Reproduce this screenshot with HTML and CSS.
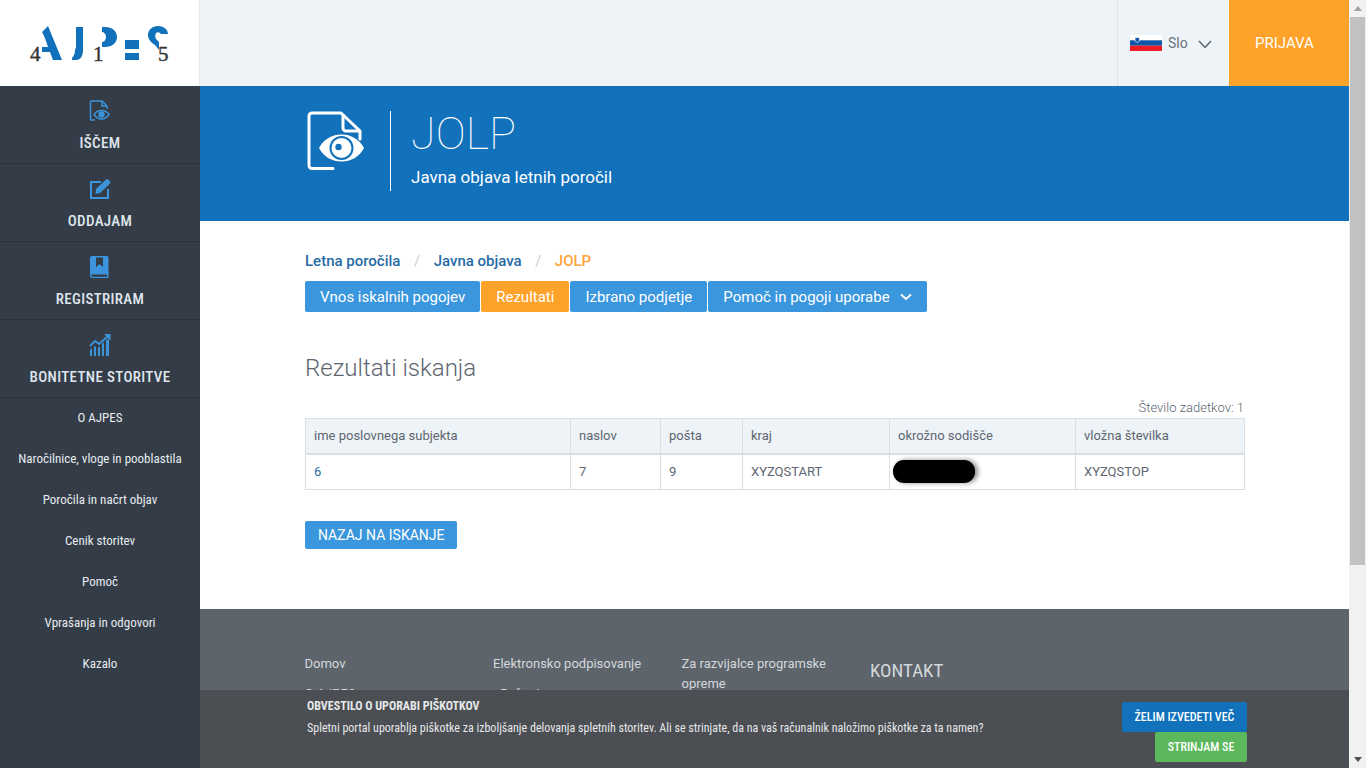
FILE: index.html
```html
<!DOCTYPE html>
<html lang="sl">
<head>
    <meta charset="UTF-8">
    <meta name="viewport" content="width=device-width, initial-scale=1.0">
    <title>JOLP - AJPES</title>
    <link rel="stylesheet" href="styles.css">
</head>
<body>
<div class="page">

    <!-- Sidebar -->
    <aside class="sidebar">
        <a class="logo" href="#">
            <svg class="logo-art" width="200" height="86" viewBox="0 0 200 86" fill="#1171bb">
                <path d="M42 32l6-6 14 34h-9l-3-8h-8v-5h6l-2-6-2-5z"/>
                <path d="M76 27h7v23c0 5-2 10-7 10h-4v-2c2-2 3-5 3-8l1-3z"/>
                <path d="M102 27h3c7 0 12 4 12 10s-5 10-12 10h-3v-5c2 0 4-2 4-5s-2-5-4-5z"/>
                <path d="M125 40h14v9h-14zM125 53h14v7h-14z"/>
                <path d="M168 34c0-5-5-8-10-8-6 0-10 4-10 9 0 5 4 8 7 10l4 5v-8l-3-3c-1-2-1-4 0-6 1-1 3-1 4 0l1 1z"/>
            </svg>
            <span class="logo-num n4">4</span>
            <span class="logo-num n1">1</span>
            <span class="logo-num n5">5</span>
        </a>

        <nav class="main-nav">
            <a class="main-item" href="#">
                <svg width="22" height="22" viewBox="0 0 22 22" fill="none" stroke="#3b94dc" stroke-width="1.4">
                    <path d="M6 20H2.500a1 1 0 0 1-1-1V2a1 1 0 0 1 1-1H13l5 5v3"/>
                    <path d="M13 1v5h5"/>
                    <path d="M5 14.500c2-3 4.500-4 7.500-4s5.500 1 7.500 4c-2 3-4.500 4.500-7.500 4.500S7 17.500 5 14.500z"/>
                    <circle cx="12.500" cy="14.500" r="2.500" fill="#3b94dc"/>
                </svg>
                <span>IŠČEM</span>
            </a>
            <a class="main-item" href="#">
                <svg width="22" height="22" viewBox="0 0 22 22" fill="none">
                    <path stroke="#3b94dc" stroke-width="2" d="M12 4H2v16h17v-9"/>
                    <path fill="#3b94dc" d="M7 11L17 1.500a1.500 1.500 0 0 1 2 0l2 2a1.500 1.500 0 0 1 0 2L11 15l-4.500 1z"/>
                </svg>
                <span>ODDAJAM</span>
            </a>
            <a class="main-item" href="#">
                <svg width="22" height="22" viewBox="0 0 22 22">
                    <path fill="#3b94dc" fill-rule="evenodd" d="M3 0h15a1.500 1.500 0 0 1 1.500 1.500V21a1 1 0 0 1-1 1H3a2 2 0 0 1-2-2V2a2 2 0 0 1 2-2zM7 1.500V11l3.500-3 3.500 3V1.500zM2.500 18.500V20a.7.7 0 0 0 .7.7H18v-2.200z"/>
                </svg>
                <span>REGISTRIRAM</span>
            </a>
            <a class="main-item" href="#">
                <svg width="22" height="22" viewBox="0 0 22 22" fill="#3b94dc">
                    <path d="M1 16l2-2v8H1zM5 12l2 1v9H5zM9 14l2-2v10H9zM13 10l2-2v14h-2zM17 6l3-1v17h-3z"/>
                    <path fill="none" stroke="#3b94dc" stroke-width="1.800" d="M1 12l5-5 4 3 9-8"/>
                    <path d="M15 0h6.500v6.500z"/>
                </svg>
                <span>BONITETNE STORITVE</span>
            </a>
        </nav>

        <nav class="sub-nav">
            <a href="#">O AJPES</a>
            <a href="#">Naročilnice, vloge in pooblastila</a>
            <a href="#">Poročila in načrt objav</a>
            <a href="#">Cenik storitev</a>
            <a href="#">Pomoč</a>
            <a href="#">Vprašanja in odgovori</a>
            <a href="#">Kazalo</a>
        </nav>
    </aside>

    <!-- Main -->
    <div class="main">
        <header class="topbar">
            <div class="lang">
                <svg class="flag" width="32" height="16" viewBox="0 0 32 16">
                    <rect width="32" height="5.300" fill="#fff"/>
                    <rect y="5.300" width="32" height="5.400" fill="#0d56a8"/>
                    <rect y="10.700" width="32" height="5.300" fill="#ed1c24"/>
                    <path d="M5 2.500h4.500v3.500L7.250 7.500 5 6z" fill="#0d56a8" stroke="#fff" stroke-width=".7"/>
                </svg>
                <span>Slo</span>
                <svg class="lang-arrow" width="14" height="9" viewBox="0 0 14 9" fill="none" stroke="#5d6670" stroke-width="1.500"><path d="M1 1l6 6.500L13 1"/></svg>
            </div>
            <a class="login" href="#">PRIJAVA</a>
        </header>

        <section class="banner">
            <svg class="banner-icon" width="58" height="60" viewBox="0 0 58 60" fill="none">
                <path stroke="#fff" stroke-width="3" stroke-linejoin="round" stroke-linecap="round" d="M26 57.500H5a3 3 0 0 1-3-3V5a3 3 0 0 1 3-3h29l19 18v8"/>
                <path stroke="#fff" stroke-width="3" stroke-linejoin="round" d="M36 3v14a3 3 0 0 0 3 3h14"/>
                <path fill="#fff" d="M12 37c5-9 13-13.500 22.500-13.500S52 28 57 37c-5 9-13 13.500-22.500 13.500S17 46 12 37z"/>
                <circle cx="34.500" cy="37" r="12" fill="#1171bb"/>
                <circle cx="34.500" cy="37" r="10" fill="#fff"/>
                <circle cx="31.500" cy="36" r="3.200" fill="#1171bb"/>
            </svg>
            <div class="banner-text">
                <h1>JOLP</h1>
                <p>Javna objava letnih poročil</p>
            </div>
        </section>

        <section class="content">
            <ol class="crumbs">
                <li><a href="#">Letna poročila</a></li>
                <li class="sep">/</li>
                <li><a href="#">Javna objava</a></li>
                <li class="sep">/</li>
                <li class="current">JOLP</li>
            </ol>

            <div class="tabs">
                <a class="tab" href="#">Vnos iskalnih pogojev</a>
                <a class="tab active" href="#">Rezultati</a>
                <a class="tab" href="#">Izbrano podjetje</a>
                <a class="tab" href="#">Pomoč in pogoji uporabe
                    <svg width="12" height="8" viewBox="0 0 12 8" fill="none" stroke="#fff" stroke-width="2"><path d="M1 1.500l5 4.500 5-4.500"/></svg>
                </a>
            </div>

            <h2>Rezultati iskanja</h2>
            <p class="hits">Število zadetkov: 1</p>

            <table class="results">
                <thead>
                    <tr>
                        <th class="c1">ime poslovnega subjekta</th>
                        <th class="c2">naslov</th>
                        <th class="c3">pošta</th>
                        <th class="c4">kraj</th>
                        <th class="c5">okrožno sodišče</th>
                        <th>vložna številka</th>
                    </tr>
                </thead>
                <tbody>
                    <tr>
                        <td><a href="#">6</a></td>
                        <td>7</td>
                        <td>9</td>
                        <td>XYZQSTART</td>
                        <td><span class="blackout"></span></td>
                        <td>XYZQSTOP</td>
                    </tr>
                </tbody>
            </table>

            <a class="back" href="#">NAZAJ NA ISKANJE</a>
        </section>

        <footer class="footer">
            <div class="foot-col">
                <a href="#">Domov</a>
                <a href="#">O AJPES</a>
            </div>
            <div class="foot-col">
                <a href="#">Elektronsko podpisovanje</a>
                <a class="indent" href="#">Računi</a>
            </div>
            <div class="foot-col">
                <a href="#">Za razvijalce programske opreme</a>
            </div>
            <div class="foot-col">
                <h3>KONTAKT</h3>
            </div>
        </footer>
    </div>

    <!-- Scrollbar -->
    <div class="scrollbar">
        <span class="arrow up"></span>
        <div class="thumb"></div>
        <span class="arrow down"></span>
    </div>
</div>

<!-- Cookie notice -->
<div class="cookie">
    <div class="cookie-text">
        <h4>OBVESTILO O UPORABI PIŠKOTKOV</h4>
        <p>Spletni portal uporablja piškotke za izboljšanje delovanja spletnih storitev. Ali se strinjate, da na vaš računalnik naložimo piškotke za ta namen?</p>
    </div>
    <div class="cookie-btns">
        <a class="more" href="#">ŽELIM IZVEDETI VEČ</a>
        <a class="agree" href="#">STRINJAM SE</a>
    </div>
</div>
</body>
</html>
```
FILE: styles.css
```css
* {
    margin: 0;
    padding: 0;
    box-sizing: border-box;
}

html, body {
    height: 100%;
    overflow: hidden;
}

body {
    font-family: Roboto, "Liberation Sans", sans-serif;
    color: #5d6670;
    background-color: #fff;
}

a {
    text-decoration: none;
    color: inherit;
}

.page {
    display: flex;
    height: 768px;
}

/* Sidebar */
.sidebar {
    width: 200px;
    flex-shrink: 0;
    background-color: #343d47;
}

.logo {
    display: block;
    position: relative;
    height: 86px;
    background-color: #fff;
    border-right: 1px solid #e3e7ea;
}

.logo-art {
    position: absolute;
    left: 0;
    top: 0;
}

.logo-num {
    position: absolute;
    top: 42px;
    font-family: "Liberation Serif", serif;
    font-size: 21px;
    line-height: 24px;
    color: #333;
    -webkit-text-stroke: 0.4px #333;
}

.n4 { left: 30px; }
.n1 { left: 93px; }
.n5 { left: 158px; }

.main-item {
    display: flex;
    flex-direction: column;
    align-items: center;
    height: 78px;
    padding-top: 14px;
    border-bottom: 1px solid #2b333c;
}

.main-item span {
    margin-top: 11px;
    font-size: 15px;
    font-weight: 500;
    line-height: 20px;
    font-stretch: condensed;
    letter-spacing: 0.35px;
    color: #dfe6ee;
}

.sub-nav {
    display: flex;
    flex-direction: column;
}

.sub-nav a {
    height: 41px;
    font-size: 13px;
    line-height: 40px;
    font-stretch: condensed;
    text-align: center;
    color: #e6ebf0;
}

/* Main */
.main {
    flex: 1;
    min-width: 0;
    display: flex;
    flex-direction: column;
    overflow: hidden;
}

.topbar {
    display: flex;
    justify-content: flex-end;
    height: 86px;
    flex-shrink: 0;
    background-color: #eef3f8;
}

.lang {
    display: flex;
    align-items: center;
    width: 112px;
    padding-left: 12px;
    border-left: 1px solid #dde3e8;
    font-size: 14px;
    color: #6b747d;
}

.flag {
    margin-right: 6px;
}

.lang-arrow {
    margin-left: 10px;
    margin-top: 3px;
}

.login {
    width: 120px;
    padding-left: 26px;
    background-color: #ffa229;
    color: #fff;
    font-size: 15px;
    line-height: 86px;
}

.banner {
    display: flex;
    align-items: flex-start;
    height: 135px;
    flex-shrink: 0;
    padding: 25px 0 0 107px;
    background-color: #1171bb;
    color: #fff;
}

.banner-icon {
    margin-right: 25px;
}

.banner-text {
    height: 80px;
    padding-left: 20px;
    border-left: 1px solid #fff;
}

.banner-text h1 {
    font-size: 45px;
    font-weight: 100;
    line-height: 46px;
}

.banner-text p {
    margin-top: 9px;
    font-size: 17px;
    line-height: 22px;
}

.content {
    height: 388px;
    flex-shrink: 0;
    padding: 30px 105px 0;
}

.crumbs {
    display: flex;
    list-style: none;
    gap: 13.500px;
    font-size: 15px;
    font-weight: 500;
    line-height: 20px;
    color: #276ba5;
}

.crumbs .sep {
    color: #ccc;
    font-weight: 400;
}

.crumbs .current {
    color: #ffa23c;
}

.tabs {
    display: flex;
    gap: 1px;
    margin-top: 10px;
}

.tab {
    display: flex;
    align-items: center;
    gap: 10px;
    height: 31px;
    padding: 0 15px;
    border-radius: 2px;
    background-color: #3a96dd;
    color: #fff;
    font-size: 15px;
}

.tab.active {
    background-color: #ffa229;
}

h2 {
    margin-top: 40px;
    font-size: 24px;
    font-weight: 300;
    line-height: 32px;
    color: #5d6670;
}

.hits {
    margin-top: 16px;
    font-size: 13px;
    font-weight: 300;
    line-height: 16px;
    text-align: right;
}

.results {
    width: 940px;
    margin-top: 2px;
    border-collapse: collapse;
    table-layout: fixed;
    font-size: 13px;
}

.results th,
.results td {
    padding: 0 8px;
    border: 1px solid #dcdfe2;
    font-weight: 400;
    text-align: left;
}

.results th {
    height: 35px;
    padding-bottom: 1px;
    background-color: #eef3f8;
    border-bottom-width: 2px;
}

.results td {
    height: 36px;
}

.results td a {
    color: #276ba5;
}

.c1 { width: 265px; }
.c2 { width: 90px; }
.c3 { width: 82px; }
.c4 { width: 147px; }
.c5 { width: 186px; }

.blackout {
    display: block;
    width: 82px;
    height: 23px;
    border-radius: 11px;
    margin-left: -5px;
    background-color: #000;
    box-shadow: 3px 0 5px rgba(0, 0, 0, 0.45);
}

.back {
    display: inline-block;
    margin-top: 31px;
    height: 28px;
    padding: 0 13px;
    border-radius: 2px;
    background-color: #3a96dd;
    color: #fff;
    font-size: 14px;
    line-height: 28px;
}

.footer {
    flex: 1;
    display: flex;
    padding: 45px 100px 0 104.500px;
    background-color: #5d646c;
    color: #d5d8db;
    font-size: 13px;
}

.foot-col {
    width: 188.500px;
    padding-right: 20px;
    flex-shrink: 0;
}

.foot-col a {
    display: block;
    line-height: 20px;
    margin-bottom: 10px;
}

.foot-col .indent {
    padding-left: 7px;
}

.foot-col h3 {
    font-size: 19px;
    font-weight: 400;
    font-stretch: condensed;
    line-height: 34px;
    white-space: nowrap;
}

/* Scrollbar */
.scrollbar {
    width: 17px;
    flex-shrink: 0;
    display: flex;
    flex-direction: column;
    align-items: center;
    background-color: #f1f1f1;
}

.arrow {
    display: block;
    width: 0;
    height: 0;
    margin: 6px 0;
    border-left: 4px solid transparent;
    border-right: 4px solid transparent;
}

.arrow.up {
    border-bottom: 5px solid #a3a3a3;
}

.arrow.down {
    border-top: 5px solid #505050;
}

.thumb {
    width: 15px;
    height: 548px;
    margin-bottom: auto;
    background-color: #c1c1c1;
}

/* Cookie notice */
.cookie {
    position: fixed;
    left: 200px;
    bottom: 0;
    width: 1149px;
    height: 78px;
    display: flex;
    justify-content: space-between;
    padding: 8px 102px 0 107px;
    background-color: #4b4e53;
    color: #e6e8ea;
    font-stretch: condensed;
}

.cookie-text h4 {
    font-size: 12px;
    line-height: 16px;
    font-weight: 700;
}

.cookie-text p {
    margin-top: 6px;
    font-size: 12px;
    line-height: 16px;
}

.cookie-btns {
    display: flex;
    flex-direction: column;
    align-items: flex-end;
    padding-top: 4px;
}

.cookie-btns a {
    height: 30px;
    border-radius: 2px;
    color: #fff;
    font-size: 12px;
    font-weight: 500;
    line-height: 30px;
    text-align: center;
}

.more {
    width: 125px;
    background-color: #1171bb;
}

.agree {
    width: 92px;
    background-color: #5cb85c;
}
```
